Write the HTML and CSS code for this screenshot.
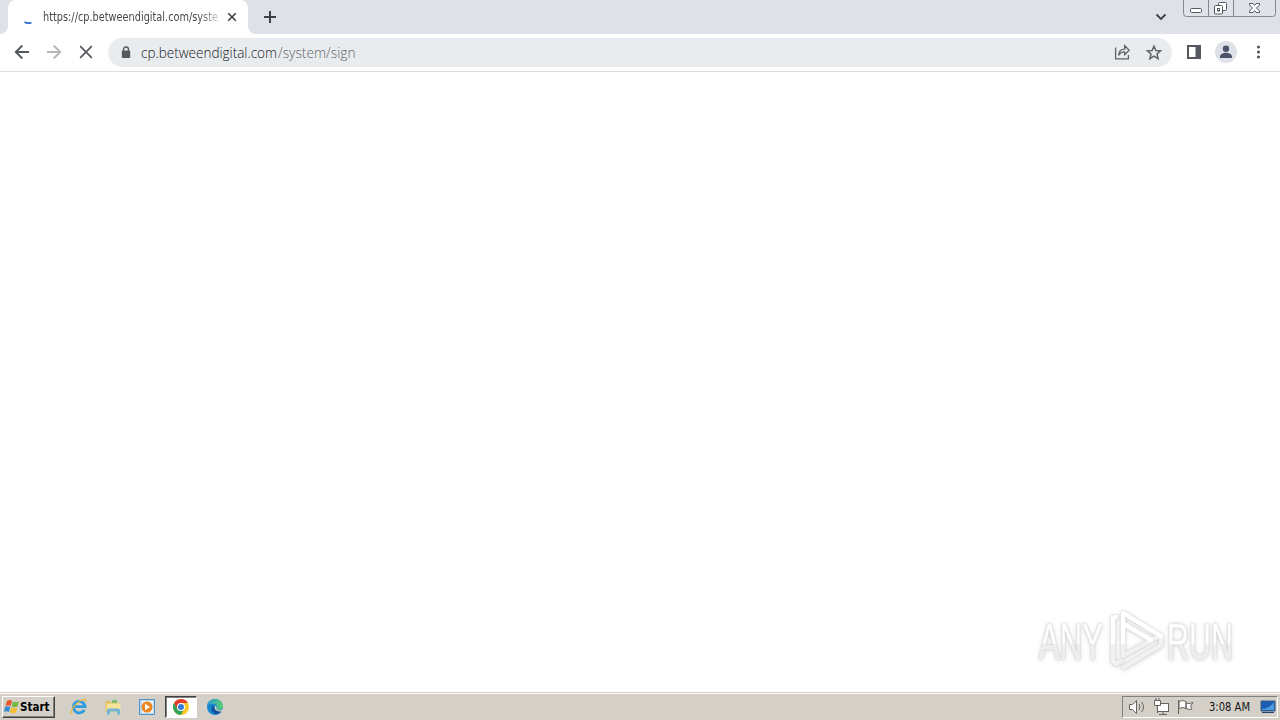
FILE: index.html
```html
<!DOCTYPE html>
<html lang="en">
<head>
<meta charset="utf-8">
<title>cp.betweendigital.com</title>
<link rel="stylesheet" href="styles.css">
</head>
<body>
<div class="screen">
  <header class="tabstrip">
    <div class="left-edge"></div>
    <div class="tab">
      <svg class="spinner" width="16" height="16" viewBox="0 0 16 16"><path d="M4.500 13Q8 15.200 11.500 13.400" fill="none" stroke="#2d6fd0" stroke-width="1.700"/></svg>
      <svg class="tab-title" width="177" height="20"><text x="0" y="12" textLength="175" lengthAdjust="spacingAndGlyphs">https://cp.betweendigital.com/syste</text></svg>
      <svg class="tab-close" width="10" height="10" viewBox="0 0 10 10"><path d="M1.200 1.200l7.600 7.600M8.800 1.200L1.200 8.800" stroke="#3c4043" stroke-width="1.600"/></svg>
    </div>
    <div class="right-edge"></div>
    <svg class="new-tab" width="12" height="12" viewBox="0 0 12 12"><path d="M6 0v12M0 6h12" stroke="#3c4043" stroke-width="2"/></svg>
    <svg class="chevron" width="12" height="8" viewBox="0 0 12 8"><path d="M1.500 1.500L6 6l4.500-4.500" fill="none" stroke="#3c4043" stroke-width="1.800"/></svg>
    <div class="window-buttons">
      <svg width="94" height="18" viewBox="0 0 94 18"><path d="M.5 0V13.500Q.5 16.500 3.500 16.500H89.500Q92.500 16.500 92.500 13.500V0" fill="#dfe2e9" stroke="#83878e"/><path d="M25.500 0V16M50.500 0V16" stroke="#83878e"/><g fill="#fff" stroke="#53575f"><rect x="7.500" y="8.500" width="11" height="4" rx="1"/><rect x="35.500" y="2.500" width="8" height="8" rx="1"/><rect x="31.500" y="5.500" width="8" height="8.500" rx="1"/><rect x="34.500" y="8.500" width="2" height="2.500"/><path d="M66.500 3.500h3.500l1.500 2 1.500-2h3.500v1.500l-3 3 3 3v1.500h-3.500l-1.500-2-1.500 2h-3.500v-1.500l3-3-3-3z"/></g></svg>
    </div>
  </header>
  <nav class="toolbar">
    <svg class="nav-icons" width="108" height="37" viewBox="0 0 108 37"><g fill="none" stroke-width="1.900"><path d="M29 18H16M22.300 11.500L15.800 18l6.500 6.500" stroke="#55595e"/><path d="M47 18H60M53.700 11.500L60.200 18l-6.500 6.500" stroke="#b5b7ba"/><path d="M80.200 12.200l11.600 11.600M91.800 12.200L80.200 23.800" stroke="#55595e" stroke-width="1.700"/></g></svg>
    <div class="omnibox">
      <svg class="lock" width="10" height="13" viewBox="0 0 10 13"><path d="M2.500 5V3.500a2.500 2.500 0 0 1 5 0V5" fill="none" stroke="#55595e" stroke-width="1.400"/><rect x=".8" y="4.600" width="8.400" height="7.400" rx="1" fill="#55595e"/></svg>
      <svg class="url" width="230" height="24"><text x="0" y="17" textLength="136" lengthAdjust="spacingAndGlyphs">cp.betweendigital.com</text><text class="path" x="137" y="17" textLength="77.500" lengthAdjust="spacingAndGlyphs">/system/sign</text></svg>
      <svg class="actions" width="54" height="29" viewBox="0 0 54 29"><g fill="none" stroke="#5f6368" stroke-width="1.300"><path d="M1.600 9.500V20.900H14.400V17"/><path d="M4.500 17.300Q5 11.100 10.700 11.100V7.700L15.200 12.300 10.700 16.800V13.800Q7 13.500 4.500 17.300Z"/><path d="M40 8.200l1.900 4.300 4.700.4-3.600 3.100 1.100 4.600-4.100-2.400-4.100 2.400 1.100-4.600-3.600-3.100 4.700-.4z" stroke-width="1.500"/></g></svg>
    </div>
    <svg class="browser-icons" width="108" height="37" viewBox="0 0 108 37"><path d="M16 12h12v12H16z" fill="#fff" stroke="#55595e" stroke-width="2"/><path d="M23.500 11H29v14h-5.500z" fill="#55595e"/><circle cx="54" cy="18" r="11" fill="#dee2e8"/><circle cx="54" cy="14.800" r="3.200" fill="#4b5269"/><path d="M48 24v-1.300c0-2.600 3.600-3.900 6-3.900s6 1.300 6 3.900V24z" fill="#4b5269"/><g fill="#55595e"><circle cx="86.500" cy="13" r="1.600"/><circle cx="86.500" cy="18" r="1.600"/><circle cx="86.500" cy="23" r="1.600"/></g></svg>
  </nav>
  <main class="page">
    <svg class="watermark" width="220" height="80" viewBox="0 0 220 80">
      <defs><linearGradient id="fade" x2="0" y2="1"><stop offset=".53" stop-color="#fff"/><stop offset=".54" stop-color="#eee"/></linearGradient></defs>
      <g class="mark">
        <text x="9" y="59" textLength="64" lengthAdjust="spacingAndGlyphs">ANY</text>
        <text x="137" y="59" textLength="66" lengthAdjust="spacingAndGlyphs">RUN</text>
        <g fill="none" stroke-width="4.500" stroke-linejoin="round" stroke-linecap="round"><path d="M83 42V61L86 64L91 61M93 42V56L127 37M94 67L131 45V38" stroke="#f1f1f1"/><path d="M83 42V18L86 17M93 42V13L131 36M94 24L121 40" stroke="#fff"/></g>
      </g>
    </svg>
  </main>
  <footer class="taskbar">
    <div class="start">
      <svg width="16" height="16" viewBox="0 0 16 16"><path d="M3 2q3-2 5 0L6.700 7q-3-1.500-5.300 0z" fill="#e9562c"/><path d="M9 2.500q3 1.500 6 0L13.500 7.500q-3 1.500-5.800 0z" fill="#76b943"/><path d="M1 8q3-1.500 5.300 0L5 13q-3-1.500-5 0z" fill="#368bd0"/><path d="M7.300 8.500q3 1.500 6 0L12 13.500q-3 1.500-6 0z" fill="#f5bd2d"/></svg>
      <svg width="31" height="16"><text x="0" y="12" textLength="29.500" lengthAdjust="spacingAndGlyphs">Start</text></svg>
    </div>
    <div class="launchers">
      <div class="launcher"><svg width="18" height="18" viewBox="0 0 18 18"><path d="M14.300 12A5.800 5.800 0 1 1 15 8.700H5" fill="none" stroke="#2e9ddd" stroke-width="2.800"/><path d="M2.500 15.500C-1 17 2 8 10 3c5-3 7-2 5.700 1" fill="none" stroke="#e7b93d" stroke-width="1.200"/></svg></div>
      <div class="launcher"><svg width="18" height="18" viewBox="0 0 18 18"><path d="M1.500 3h5l1 2h8v9h-14z" fill="#dfbd58"/><path d="M8 2h5v3H8z" fill="#80bd73"/><path d="M2.500 5.500h14v8h-14z" fill="#f5e39c"/><path d="M3 16.500v-4q0-2 2-2h9q2 0 2 2v4h-3v-3H6v3z" fill="#72b5d9"/></svg></div>
      <div class="launcher"><svg width="18" height="18" viewBox="0 0 18 18"><path d="M1.500 1.500h15v15h-15z" fill="#b9d8ef" stroke="#5293c3"/><path d="M4 3h11v12H4z" fill="#e8f2f9"/><circle cx="9" cy="9" r="5.500" fill="#ed8520"/><path d="M7 5.800v6.400L12 9z" fill="#fff"/></svg></div>
      <div class="launcher active"><svg width="18" height="18" viewBox="0 0 18 18"><circle cx="9" cy="9" r="8" fill="#fbc927"/><path d="M9 9L2.070 5A8 8 0 0 0 9 17l3-6z" fill="#35a457"/><path d="M9 5h6.930A8 8 0 0 0 2.070 5L5.500 11z" fill="#df3e31"/><circle cx="9" cy="9" r="4" fill="#fff"/><circle cx="9" cy="9" r="3" fill="#3679de"/></svg></div>
      <div class="launcher"><svg width="18" height="18" viewBox="0 0 18 18"><defs><linearGradient id="edge"><stop stop-color="#2797d9"/><stop offset="1" stop-color="#5bd16b"/></linearGradient></defs><circle cx="9" cy="9" r="8" fill="#1685ce"/><path d="M1 8C2-1 16-1 17 8c0 4-4 5-7 3 2-2 1-5-2-5S2 6 1 8z" fill="url(#edge)"/><path d="M7 7c-3 3-1 8 3 9 3 0 5-2 6-4-3 2-7 1-8-2z" fill="#154e9b"/><path d="M9.500 7.500c2 2 .5 3 1.500 4 2 1.500 4 1 6-.5v2.500h-4c-4-1-5-3-3.500-6z" fill="#d4d0c8"/></svg></div>
    </div>
    <div class="tray">
      <svg width="82" height="20" viewBox="0 0 82 20"><g fill="#fff" stroke="#66635f"><path d="M6.500 7.500h3l4-4v13l-4-4h-3z"/><path d="M16 7q2 3 0 6M18.500 5q4 5 0 10" fill="none"/><rect x="34.500" y="6.500" width="11" height="8"/><path d="M36 17.500h8M40 15v2"/><path d="M31.500 3.500h6v5h-6zM33 1v2M36 1v2M34.500 9v7"/><path d="M55.500 3v14M56 4.500q4-2 7 0v7q-3-2-7 0zM63 6q3 1.500 7-.5L67.500 9l1.500 3q-3 1-6-.5z"/></g></svg>
      <svg class="clock" width="44" height="18"><text x="0" y="13" textLength="41" lengthAdjust="spacingAndGlyphs">3:08 AM</text></svg>
      <svg class="desktop" width="16" height="14" viewBox="0 0 16 14"><path d="M1 1h14v10H1z" fill="#1b5cb4" stroke="#405c83"/><path d="M2 9Q10 8 14 2v8H2z" fill="#4b9add"/><path d="M2 12.500h12" stroke="#23436b"/></svg>
    </div>
  </footer>
</div>
</body>
</html>
```
FILE: styles.css
```css
* { box-sizing: border-box; }
body { margin: 0; overflow: hidden; }
svg { display: block; flex: none; }
.screen { width: 1280px; height: 720px; display: flex; flex-direction: column; background: #fff; }
.tabstrip { height: 34px; background: #dee1e8; display: flex; align-items: flex-start; }
.left-edge, .right-edge { width: 8px; height: 34px; background: #fff; flex: none; }
.left-edge::before, .right-edge::before { content: ""; display: block; height: 34px; background: #dee1e8; }
.left-edge::before { border-bottom-right-radius: 8px; }
.right-edge::before { border-bottom-left-radius: 8px; }
.tab { width: 240px; height: 34px; padding-left: 12px; border-radius: 8px 8px 0 0; background: #fff; display: flex; align-items: center; flex: none; }
.spinner { margin-right: 7px; }
.tab-title { width: 177px; margin-right: 7px; margin-top: 3px; -webkit-mask-image: linear-gradient(90deg, #000 155px, rgba(0, 0, 0, .2) 177px); mask-image: linear-gradient(90deg, #000 155px, rgba(0, 0, 0, .2) 177px); }
.tab-title text { font: 11.5px "DejaVu Sans Condensed", "DejaVu Sans", sans-serif; fill: #45484d; }
.new-tab { margin: 11px 0 0 8px; }
.chevron { margin: 13px 16px 0 auto; }
.window-buttons { width: 97px; }
.toolbar { height: 38px; border-bottom: 1px solid #dcdddf; display: flex; }
.omnibox { width: 1064px; height: 29px; margin-top: 4px; border-radius: 15px; background: #e9ecef; display: flex; align-items: center; flex: none; }
.lock { margin: 0 10px 1px 13px; }
.url text { font: 300 14.5px "Open Sans", "Noto Sans", sans-serif; fill: #15191f; }
.url .path { fill: #62666b; }
.actions { margin-left: auto; margin-right: 4px; }
.page { flex: 1; display: flex; align-items: flex-end; justify-content: flex-end; padding: 0 40px 12px 0; }
.watermark { margin-right: -10px; }
.mark { filter: drop-shadow(0 0 1px #c9c9c9) drop-shadow(0 1px 2px #e2e2e2); }
.mark text { font: 50px "Liberation Sans", sans-serif; fill: url(#fade); stroke: #f5f5f5; stroke-width: .5px; }
.taskbar { height: 28px; border-top: 1px solid #d4d0c8; box-shadow: inset 0 1px #fff; background: #d4d0c8; display: flex; align-items: center; padding: 0 2px; }
.start { width: 53px; height: 22px; display: flex; align-items: center; padding-left: 1px; border: 1px solid; border-color: #fff #404040 #404040 #fff; box-shadow: inset -1px -1px #808080; }
.start text { font: bold 11.5px "DejaVu Sans Condensed", "DejaVu Sans", sans-serif; fill: #000; }
.launchers { display: flex; gap: 2px; margin-left: 8px; }
.launcher { width: 32px; height: 22px; display: flex; align-items: center; justify-content: center; }
.launcher.active { background: #fff; border: 1px solid; border-color: #404040 #fff #fff #404040; box-shadow: inset 1px 1px #808080; }
.tray { width: 156px; height: 22px; margin-left: auto; border: 1px solid; border-color: #808080 #fff #fff #808080; display: flex; align-items: center; }
.clock { margin-left: 4px; }
.clock text { font: 11.5px "DejaVu Sans Condensed", "DejaVu Sans", sans-serif; fill: #161616; }
.desktop { margin-left: 7px; }
```
